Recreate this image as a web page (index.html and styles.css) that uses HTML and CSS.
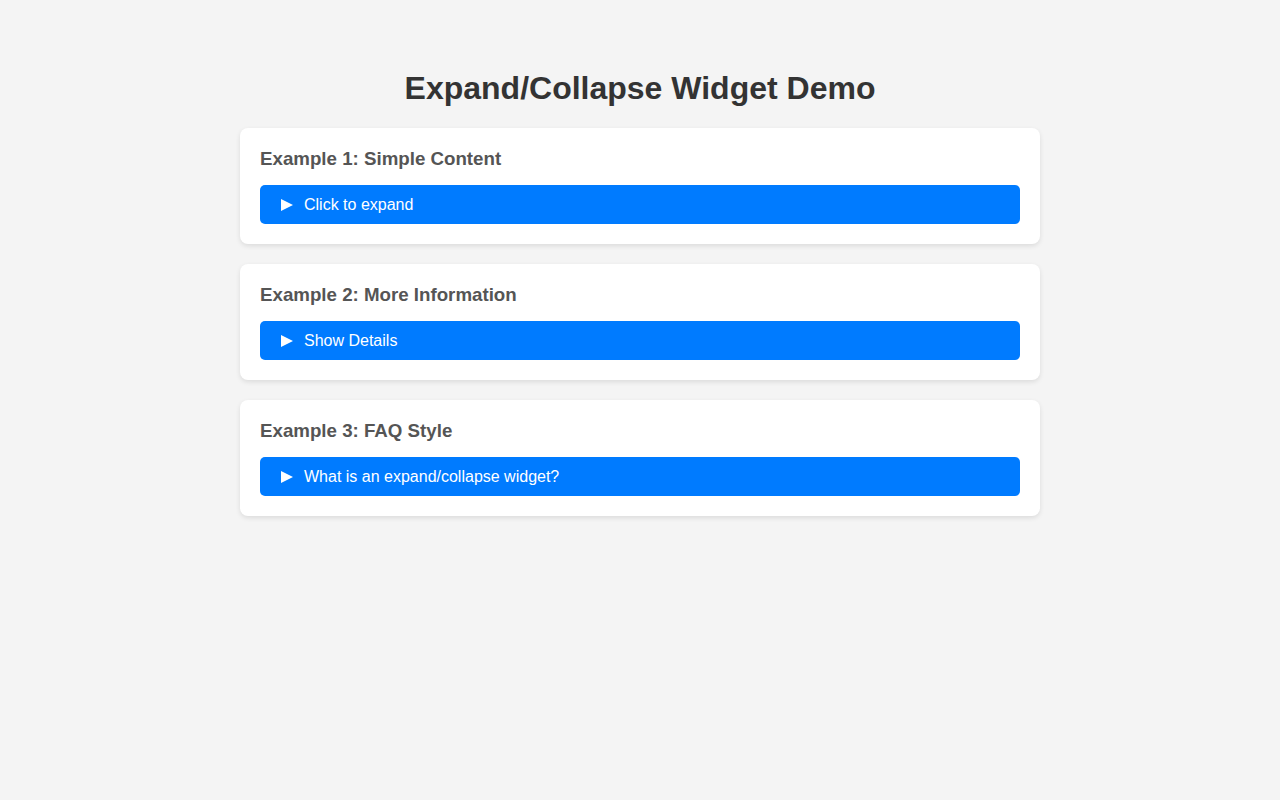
FILE: index.html
```html
<!DOCTYPE html>
<html lang="en">
<head>
    <meta charset="UTF-8">
    <meta name="viewport" content="width=device-width, initial-scale=1.0">
    <title>Expand/Collapse Widget Demo</title>
    <link rel="stylesheet" href="styles.css">
</head>
<body>

    <div class="container">
        <h1>Expand/Collapse Widget Demo</h1>

        <div class="example">
            <h3>Example 1: Simple Content</h3>
            <details class="expander">
                <summary>Click to expand</summary>
                <div class="content">This is some simple hidden content.</div>
            </details>
        </div>

        <div class="example">
            <h3>Example 2: More Information</h3>
            <details class="expander">
                <summary>Show Details</summary>
                <div class="content">Here are some more details about the topic.</div>
            </details>
        </div>

        <div class="example">
            <h3>Example 3: FAQ Style</h3>
            <details class="expander">
                <summary>What is an expand/collapse widget?</summary>
                <div class="content">It is a control that shows or hides a section of content.</div>
            </details>
        </div>
    </div>

</body>
</html>
```

FILE: styles.css
```css
* {
    box-sizing: border-box;
}

body {
    margin: 0;
    background: #f4f4f4;
    font-family: 'Liberation Sans', Arial, sans-serif;
    color: #333;
}

.container {
    width: 800px;
    margin: 0 auto;
    padding-top: 70px;
}

.container h1 {
    margin: 0 0 21px;
    font-size: 32px;
    text-align: center;
    color: #333;
}

.example {
    background: white;
    border-radius: 8px;
    padding: 20px;
    margin-bottom: 20px;
    box-shadow: 0 2px 5px rgba(0, 0, 0, 0.1);
}

.example h3 {
    margin: 0 0 15px;
    font-size: 18.72px;
    color: #555;
}

.expander summary {
    display: flex;
    align-items: center;
    list-style: none;
    background: #007bff;
    color: white;
    padding: 10px 20px;
    line-height: 19px;
    border-radius: 5px;
    font-size: 16px;
    cursor: pointer;
}

.expander summary::-webkit-details-marker {
    display: none;
}

.expander summary::before {
    content: "";
    width: 0;
    height: 0;
    margin: 0 11px 0 1px;
    border-left: 12px solid white;
    border-top: 6px solid transparent;
    border-bottom: 6px solid transparent;
}

.expander[open] summary::before {
    transform: rotate(90deg);
}

.expander .content {
    padding: 15px 20px;
    color: #333;
}
```
